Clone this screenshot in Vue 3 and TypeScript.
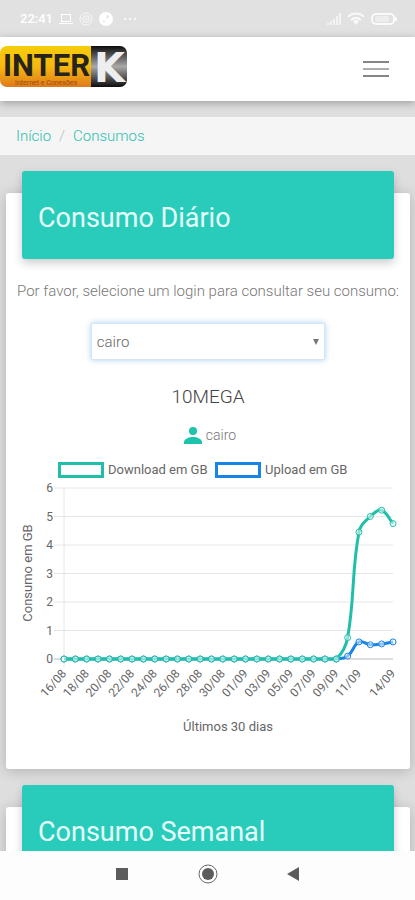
<script setup lang="ts">
import { ref } from 'vue'

interface Series {
  label: string
  color: string
  values: number[]
}

interface Point {
  x: number
  y: number
}

const logins = ['cairo']
const login = ref('cairo')

const area = { left: 58, right: 387, top: 30, bottom: 201 }
const maxValue = 6
const count = 30
const ticks = [0, 1, 2, 3, 4, 5, 6]

const zeros = (n: number): number[] => Array.from({ length: n }, () => 0)

const upload: Series = {
  label: 'Upload em GB',
  color: '#1784e6',
  values: [...zeros(25), 0.1, 0.6, 0.5, 0.53, 0.6],
}
const download: Series = {
  label: 'Download em GB',
  color: '#1fbfa9',
  values: [...zeros(25), 0.75, 4.45, 5, 5.22, 4.75],
}
const series = [upload, download]

const xAt = (i: number): number => area.left + (i * (area.right - area.left)) / (count - 1)
const yAt = (v: number): number => area.bottom - (v * (area.bottom - area.top)) / maxValue

function dayLabel(i: number): string {
  const day = 16 + i
  return day <= 31 ? `${day}/08` : `${String(day - 31).padStart(2, '0')}/09`
}

const labelled = [0, 2, 4, 6, 8, 10, 12, 14, 16, 18, 20, 22, 24, 26, 29]
const dayLabels = labelled.map((i) => ({ text: dayLabel(i), x: xAt(i) }))

function pointsOf(s: Series): Point[] {
  return s.values.map((v, i) => ({ x: xAt(i), y: yAt(v) }))
}

const clampY = (y: number): number => Math.min(area.bottom, Math.max(area.top, y))

/* Smoothed line: control points follow the neighbours, kept inside the plot. */
function pathOf(s: Series): string {
  const pts = pointsOf(s)
  const controls = pts.map((p, i) => {
    const prev = pts[i - 1] ?? p
    const next = pts[i + 1] ?? p
    const before = Math.hypot(p.x - prev.x, p.y - prev.y)
    const after = Math.hypot(next.x - p.x, next.y - p.y)
    const total = before + after
    const a = (0.4 * before) / total
    const b = (0.4 * after) / total
    return {
      inX: p.x - a * (next.x - prev.x),
      inY: clampY(p.y - a * (next.y - prev.y)),
      outX: p.x + b * (next.x - prev.x),
      outY: clampY(p.y + b * (next.y - prev.y)),
    }
  })
  return pts
    .map((p, i) => {
      if (i === 0) return `M${p.x} ${p.y}`
      const c0 = controls[i - 1]
      const c1 = controls[i]
      return `C${c0.outX} ${c0.outY} ${c1.inX} ${c1.inY} ${p.x} ${p.y}`
    })
    .join('')
}
</script>

<template>
  <div class="screen">
    <div class="status">
      <div class="status-side">
        <span class="clock">22:41</span>
        <svg width="14" height="12" viewBox="0 0 14 12" fill="none" stroke="#fff">
          <rect x="2.5" y="1.5" width="9" height="7" />
          <path d="M0 10.5h14" />
        </svg>
        <svg width="14" height="14" viewBox="0 0 14 14" fill="none" stroke="#fff" opacity=".8">
          <circle cx="7" cy="7" r="6" />
          <rect x="4" y="4" width="6" height="6" rx="2" />
          <circle cx="7" cy="7" r="1" />
        </svg>
        <svg width="14" height="14" viewBox="0 0 14 14">
          <circle cx="7" cy="7" r="7" fill="#fff" />
          <path d="M8 3l2 1-1 2-2 1zM4 8l2 1-1 2z" fill="#e1e1e1" />
        </svg>
        <svg class="more" width="14" height="4" viewBox="0 0 14 4" fill="#fff">
          <circle cx="2" cy="2" r="1" /><circle cx="7" cy="2" r="1" /><circle cx="12" cy="2" r="1" />
        </svg>
      </div>
      <div class="status-side end">
        <svg width="14" height="12" viewBox="0 0 14 12" fill="#fff" opacity=".6">
          <path d="M0 10h2v2H0zM3 8h2v4H3zM6 6h2v6H6zM9 3h2v9H9zM12 0h2v12h-2z" />
        </svg>
        <svg width="18" height="13" viewBox="0 0 18 13" fill="none" stroke="#fff" stroke-width="2" opacity=".85">
          <path d="M1 5a11 11 0 0 1 16 0M4 8a7 7 0 0 1 10 0" />
          <path d="M6 9a4 4 0 0 1 6 0l-3 4z" fill="#fff" stroke="none" />
        </svg>
        <svg width="27" height="14" viewBox="0 0 27 14" fill="none" stroke="#fff" stroke-width="2" opacity=".85">
          <rect x="1" y="2" width="22" height="10" rx="4" />
          <rect x="4" y="4" width="14" height="6" rx="2" fill="#fff" stroke="none" opacity=".5" />
          <path d="M25 5v4" />
        </svg>
      </div>
    </div>

    <header class="topbar">
      <a class="brand" href="#" aria-label="INTER K">
        <svg width="128" height="42" viewBox="0 0 128 42">
          <defs>
            <linearGradient id="gold" x1="0" y1="0" x2="0" y2="1">
              <stop offset="0" stop-color="#f6cd0b" />
              <stop offset=".5" stop-color="#f5b80f" />
              <stop offset="1" stop-color="#e07a1c" />
            </linearGradient>
            <linearGradient id="steel" x1="0" y1="0" x2="0" y2="1">
              <stop offset="0" stop-color="#0c0c0c" />
              <stop offset=".5" stop-color="#a9a9a9" />
              <stop offset="1" stop-color="#0c0c0c" />
            </linearGradient>
            <clipPath id="plate"><rect width="127" height="41" rx="7" /></clipPath>
          </defs>
          <g clip-path="url(#plate)">
            <rect width="91" height="41" fill="url(#gold)" />
            <rect x="91" width="37" height="41" fill="url(#steel)" />
          </g>
          <text class="inter" x="3" y="30">INTER</text>
          <text class="tagline" x="15" y="39">Internet e Conexões</text>
          <text class="kay" x="94" y="36">K</text>
        </svg>
      </a>
      <button class="menu" type="button" aria-label="Menu">
        <svg width="26" height="16" viewBox="0 0 26 16">
          <path d="M0 1h26M0 15h26" stroke="#858585" stroke-width="2" />
          <path d="M0 8h26" stroke="#adadad" stroke-width="2" />
        </svg>
      </button>
    </header>

    <main class="content">
      <nav class="crumbs">
        <a href="#">Início</a>
        <span>/</span>
        <a href="#">Consumos</a>
      </nav>

      <section class="card">
        <h2 class="card-title">Consumo Diário</h2>
        <label class="hint" for="login">Por favor, selecione um login para consultar seu consumo:</label>
        <div class="picker">
          <select id="login" v-model="login">
            <option v-for="name in logins" :key="name" :value="name">{{ name }}</option>
          </select>
          <svg class="caret" width="6" height="6" viewBox="0 0 6 6"><path d="M0 0h6L3 6z" fill="#777" /></svg>
        </div>
        <h3 class="plan">10MEGA</h3>
        <p class="user">
          <svg width="18" height="18" viewBox="0 0 18 18" fill="#1cc4ad">
            <circle cx="9" cy="5" r="4" />
            <path d="M0 18v-2c0-3 5-5 9-5s9 2 9 5v2z" />
          </svg>
          <span>{{ login }}</span>
        </p>

        <svg class="chart" viewBox="0 0 404 284" role="img">
          <rect x="53.5" y="5.5" width="43" height="13" fill="#fff" :stroke="download.color" stroke-width="3" />
          <text class="caption" x="102" y="16">{{ download.label }}</text>
          <rect x="210.5" y="5.5" width="43" height="13" fill="#fff" :stroke="upload.color" stroke-width="3" />
          <text class="caption" x="259" y="16">{{ upload.label }}</text>

          <g v-for="t in ticks" :key="t">
            <line
              :x1="area.left - 10" :x2="area.right" :y1="yAt(t)" :y2="yAt(t)"
              :class="t === 0 ? 'axis' : 'grid'"
            />
            <text x="47" :y="yAt(t) + 4" text-anchor="end">{{ t }}</text>
          </g>
          <line class="grid" :x1="area.left" :x2="area.left" :y1="area.top" :y2="area.bottom + 8" />

          <g v-for="s in series" :key="s.label" :stroke="s.color">
            <path :d="pathOf(s)" fill="none" stroke-width="3" />
            <circle
              v-for="(p, i) in pointsOf(s)" :key="i" :cx="p.x" :cy="p.y" r="3"
              fill="#fff" fill-opacity=".5"
            />
          </g>

          <text
            v-for="d in dayLabels" :key="d.text" text-anchor="end"
            :transform="`translate(${d.x + 3} 216) rotate(-48)`"
          >{{ d.text }}</text>
          <text class="caption" text-anchor="middle" transform="translate(26 115) rotate(-90)">Consumo em GB</text>
          <text class="caption" x="222" y="273" text-anchor="middle">Últimos 30 dias</text>
        </svg>
      </section>

      <section class="card">
        <h2 class="card-title">Consumo Semanal</h2>
      </section>
    </main>

    <footer class="navbar">
      <button type="button" aria-label="Recentes">
        <svg width="20" height="20" viewBox="0 0 20 20"><rect x="4" y="4" width="12" height="12" fill="#5c5c5c" /></svg>
      </button>
      <button type="button" aria-label="Início">
        <svg width="20" height="20" viewBox="0 0 20 20">
          <circle cx="10" cy="10" r="9" fill="none" stroke="#6a6a6a" />
          <circle cx="10" cy="10" r="6" fill="#5c5c5c" />
        </svg>
      </button>
      <button type="button" aria-label="Voltar">
        <svg width="20" height="20" viewBox="0 0 20 20"><path d="M3 10l12-7v14z" fill="#5c5c5c" /></svg>
      </button>
    </footer>
  </div>
</template>

<style>
body {
  margin: 0;
}
</style>

<style scoped>
.screen {
  display: flex;
  flex-direction: column;
  height: 100vh;
  overflow: hidden;
  background: #dedede;
  color: #666;
  font-family: Roboto, 'Liberation Sans', sans-serif;
  font-size: 15px;
  font-weight: 300;
}
svg {
  display: block;
}
button {
  padding: 0;
  border: 0;
  background: none;
}
.status {
  flex: none;
  display: flex;
  justify-content: space-between;
  height: 37px;
  padding: 0 17px 0 20px;
  background: #e1e1e1;
}
.status-side {
  display: flex;
  align-items: center;
  gap: 6px;
}
.clock {
  color: #fff;
  font-size: 13px;
  font-weight: 500;
}
.more {
  margin-left: 4px;
}
.topbar {
  position: relative;
  flex: none;
  display: flex;
  align-items: center;
  justify-content: space-between;
  height: 64px;
  padding-right: 26px;
  background: #fff;
  box-shadow: 0 2px 8px rgba(0, 0, 0, 0.3);
}
.brand {
  margin-bottom: 4px;
}
.inter {
  fill: #26231a;
  font-family: Roboto, sans-serif;
  font-size: 31px;
  font-weight: 700;
}
.tagline {
  fill: #9a4a12;
  font-size: 7px;
  font-weight: 400;
}
.kay {
  fill: #eee;
  font-family: 'DejaVu Sans', sans-serif;
  font-size: 40px;
  font-weight: 700;
}
.content {
  flex: 1;
  min-height: 0;
  padding-top: 16px;
  overflow: hidden;
}
.crumbs {
  display: flex;
  gap: 8px;
  padding: 0 16px;
  background: #f5f5f5;
  line-height: 38px;
}
.crumbs a {
  color: #2bc0b1;
  text-decoration: none;
}
.crumbs span {
  color: #bbb;
}
.card {
  display: flex;
  flex-direction: column;
  margin: 38px 5px 0 6px;
  padding-bottom: 27px;
  border-radius: 3px;
  background: #fff;
  box-shadow: 0 2px 14px rgba(0, 0, 0, 0.2);
}
.card-title {
  margin: -22px 16px 0;
  padding: 6px 16px 0;
  border-radius: 3px;
  background: #29ccba;
  box-shadow: 0 4px 10px rgba(0, 0, 0, 0.2);
  color: #e6fffb;
  font-size: 27px;
  font-weight: 400;
  line-height: 82px;
}
.hint {
  margin-top: 22px;
  color: #777;
  line-height: 20px;
  text-align: center;
  white-space: nowrap;
}
.picker {
  position: relative;
  align-self: center;
  width: 58%;
  margin-top: 22px;
}
select {
  display: block;
  width: 100%;
  height: 37px;
  padding: 0 5px;
  border: 1px solid #d6e5f2;
  border-radius: 0;
  outline: none;
  appearance: none;
  background: #fff;
  box-shadow: 0 0 6px rgba(110, 175, 235, 0.6);
  color: #666;
  font: inherit;
}
.caret {
  position: absolute;
  top: 16px;
  right: 6px;
  pointer-events: none;
}
.plan {
  margin: 25px 0 0;
  color: #444;
  font-size: 19px;
  font-weight: 300;
  line-height: 24px;
  text-align: center;
}
.user {
  display: flex;
  align-items: center;
  justify-content: center;
  gap: 4px;
  margin: 16px 0 0;
  padding-left: 4px;
  color: #777;
  font-size: 14px;
  line-height: 20px;
}
.chart {
  width: 100%;
  margin-top: 13px;
}
.chart text {
  fill: #666;
  font-size: 12px;
  font-weight: 400;
}
.chart .caption {
  font-size: 13px;
}
.grid {
  stroke: #e6e6e6;
}
.axis {
  stroke: #bdbdbd;
}
.navbar {
  position: relative;
  flex: none;
  display: flex;
  align-items: center;
  justify-content: center;
  gap: 66px;
  height: 45px;
  padding-bottom: 4px;
  background: #fdfdfd;
}
</style>
